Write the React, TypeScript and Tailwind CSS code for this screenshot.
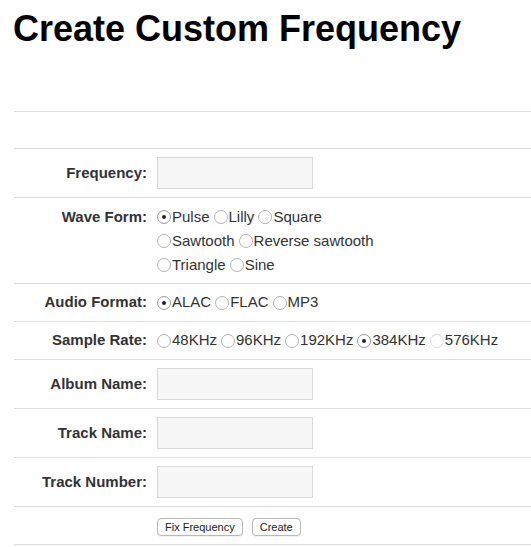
import React from "react";

function Radio({ checked = false, faint = false }: { checked?: boolean; faint?: boolean }) {
  return (
    <span
      className={`inline-flex items-center justify-center w-[14px] h-[14px] rounded-full border bg-white shrink-0 mr-[1px] ${
        faint ? "border-[#dcdcdc]" : checked ? "border-[#9a9a9a]" : "border-[#b4b4b4]"
      }`}
    >
      {checked && <span className="block w-[4px] h-[4px] rounded-full bg-[#222]" />}
    </span>
  );
}

function Opt({ label, checked, faint }: { label: string; checked?: boolean; faint?: boolean }) {
  return (
    <span className="inline-flex items-center">
      <Radio checked={checked} faint={faint} />
      <span>{label}</span>
    </span>
  );
}

function Label({ children, top }: { children: React.ReactNode; top?: boolean }) {
  return (
    <div
      className={`w-[139px] shrink-0 pr-[6px] text-right font-bold text-[#333] ${
        top ? "pt-[7px] leading-[24px]" : ""
      }`}
    >
      {children}
    </div>
  );
}

function Input() {
  return <div className="w-[156px] h-[32px] border border-[#d9d9d9] bg-[#f7f7f7]" />;
}

export default function App() {
  return (
    <div
      className="bg-white min-h-[547px] text-[15px] text-[#333]"
      style={{ fontFamily: '"Liberation Sans", Arial, Helvetica, sans-serif' }}
    >
      <div className="h-[111px] pl-[13px]">
        <h1 className="pt-[9px] text-[36px] leading-[40px] font-bold text-black">Create Custom Frequency</h1>
      </div>
      <div className="ml-[14px]">
        <div className="border-t border-[#ddd] h-[37px]" />
        <div className="border-t border-[#ddd] h-[49px] flex items-center">
          <Label>Frequency:</Label>
          <div className="pl-[4px]">
            <Input />
          </div>
        </div>
        <div className="border-t border-[#ddd] h-[86px] flex items-start">
          <Label top>Wave Form:</Label>
          <div className="pl-[4px] pt-[7px] leading-[24px] flex flex-col">
            <div className="flex gap-x-[4px]">
              <Opt label="Pulse" checked />
              <Opt label="Lilly" />
              <Opt label="Square" />
            </div>
            <div className="flex gap-x-[4px]">
              <Opt label="Sawtooth" />
              <Opt label="Reverse sawtooth" />
            </div>
            <div className="flex gap-x-[4px]">
              <Opt label="Triangle" />
              <Opt label="Sine" />
            </div>
          </div>
        </div>
        <div className="border-t border-[#ddd] h-[38px] flex items-center">
          <Label>Audio Format:</Label>
          <div className="pl-[4px] flex gap-x-[4px]">
            <Opt label="ALAC" checked />
            <Opt label="FLAC" />
            <Opt label="MP3" />
          </div>
        </div>
        <div className="border-t border-[#ddd] h-[38px] flex items-center">
          <Label>Sample Rate:</Label>
          <div className="pl-[4px] flex gap-x-[4px]">
            <Opt label="48KHz" />
            <Opt label="96KHz" />
            <Opt label="192KHz" />
            <Opt label="384KHz" checked />
            <Opt label="576KHz" faint />
          </div>
        </div>
        <div className="border-t border-[#ddd] h-[49px] flex items-center">
          <Label>Album Name:</Label>
          <div className="pl-[4px]">
            <Input />
          </div>
        </div>
        <div className="border-t border-[#ddd] h-[49px] flex items-center">
          <Label>Track Name:</Label>
          <div className="pl-[4px]">
            <Input />
          </div>
        </div>
        <div className="border-t border-[#ddd] h-[49px] flex items-center">
          <Label>Track Number:</Label>
          <div className="pl-[4px]">
            <Input />
          </div>
        </div>
        <div className="border-t border-b border-[#ddd] h-[39px] flex items-center">
          <div className="w-[139px] shrink-0" />
          <div className="pl-[4px] pt-[3px] flex gap-x-[9px]">
            <button className="h-[18px] px-[7px] rounded-[4px] border border-[#b9b9b9] bg-white text-[11px] leading-[16px] text-[#222] shadow-[0_1px_0_rgba(0,0,0,0.05)]">
              Fix Frequency
            </button>
            <button className="h-[18px] px-[7px] rounded-[4px] border border-[#b9b9b9] bg-white text-[11px] leading-[16px] text-[#222] shadow-[0_1px_0_rgba(0,0,0,0.05)]">
              Create
            </button>
          </div>
        </div>
      </div>
    </div>
  );
}
